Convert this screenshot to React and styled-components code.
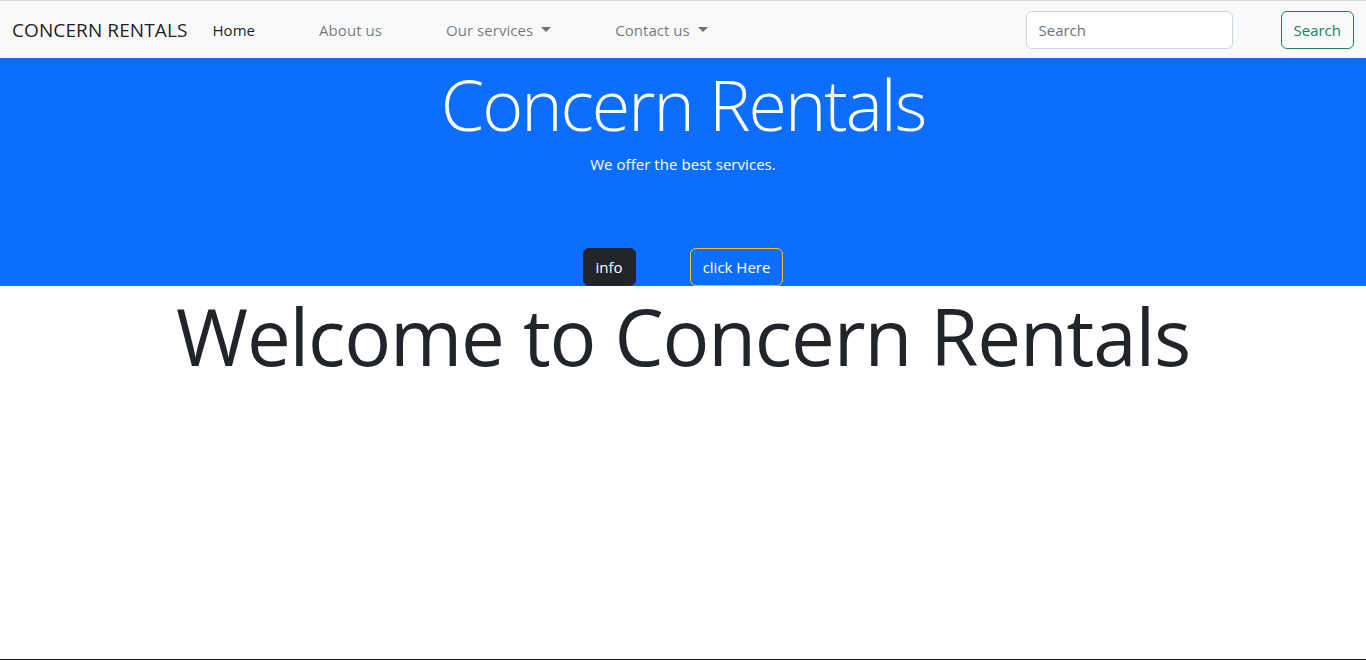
import React from "react";
import styled, { createGlobalStyle } from "styled-components";

const Global = createGlobalStyle`
  html, body { margin: 0; padding: 0; }
  body {
    font-family: "Open Sans", "Noto Sans", sans-serif;
    font-size: 16px;
    color: #212529;
    background: #fff;
  }
  * { box-sizing: border-box; }
`;

const Page = styled.div`
  min-height: 660px;
  display: flex;
  flex-direction: column;
  border-top: 1px solid #dcdcdc;
  border-bottom: 1px solid #1a1a1a;
`;

const Navbar = styled.nav`
  height: 57px;
  background: #f8f9fa;
  display: flex;
  align-items: center;
  padding: 0 12px;
`;

const Brand = styled.a`
  font-size: 19px;
  letter-spacing: 0.1px;
  color: rgba(0, 0, 0, 0.9);
  margin-right: 25px;
  text-decoration: none;
  white-space: nowrap;
`;

const NavList = styled.ul`
  display: flex;
  gap: 64px;
  list-style: none;
  margin: 0;
  padding: 0;
  flex: 1;
`;

const NavLink = styled.a`
  display: flex;
  align-items: center;
  font-size: 15px;
  letter-spacing: 0.05px;
  color: ${(p) => (p.$active ? "rgba(0,0,0,0.9)" : "rgba(0,0,0,0.55)")};
  text-decoration: none;
  white-space: nowrap;
`;

const Caret = styled.span`
  display: inline-block;
  margin-left: 8px;
  width: 0;
  height: 0;
  border-left: 5px solid transparent;
  border-right: 5px solid transparent;
  border-top: 5px solid currentColor;
`;

const SearchForm = styled.form`
  display: flex;
  align-items: center;
  gap: 48px;
`;

const SearchInput = styled.input`
  width: 207px;
  height: 38px;
  border: 1px solid #ced4da;
  border-radius: 6px;
  padding: 0 12px;
  font-family: inherit;
  font-size: 15px;
  background: #fff;
  &::placeholder { color: #6c757d; }
`;

const OutlineButton = styled.button`
  height: 38px;
  padding: 0 12px;
  border: 1px solid #198754;
  border-radius: 6px;
  background: transparent;
  color: #198754;
  font-family: inherit;
  font-size: 15px;
`;

const Hero = styled.header`
  background: #0d6efd;
  height: 228px;
  display: flex;
  flex-direction: column;
  align-items: center;
  color: #fff;
`;

const HeroTitle = styled.h1`
  margin: 4px 0 0;
  font-size: 70px;
  font-weight: 300;
  line-height: 1.2;
  letter-spacing: -2px;
`;

const HeroText = styled.p`
  margin: 8px 0 0;
  font-size: 15px;
  letter-spacing: 0.05px;
`;

const ButtonRow = styled.div`
  margin-top: auto;
  display: flex;
  gap: 54px;
`;

const HeroButton = styled.button`
  height: 38px;
  padding: 0 12px;
  border-radius: 6px;
  font-family: inherit;
  font-size: 15px;
  letter-spacing: 0;
  color: #fff;
  background: ${(p) => (p.$dark ? "#212529" : "transparent")};
  border: 1px solid ${(p) => (p.$dark ? "#212529" : "#ffc107")};
`;

const Welcome = styled.h2`
  margin: 4px 0 0;
  text-align: center;
  font-size: 78px;
  font-weight: 400;
  line-height: 1.2;
  letter-spacing: -1.15px;
  color: #212529;
`;

export default function App() {
  return (
    <>
      <Global />
      <Page>
        <Navbar>
          <Brand href="#">CONCERN RENTALS</Brand>
          <NavList>
            <li><NavLink href="#" $active>Home</NavLink></li>
            <li><NavLink href="#">About us</NavLink></li>
            <li><NavLink href="#">Our services<Caret /></NavLink></li>
            <li><NavLink href="#">Contact us<Caret /></NavLink></li>
          </NavList>
          <SearchForm onSubmit={(e) => e.preventDefault()}>
            <SearchInput placeholder="Search" />
            <OutlineButton type="submit">Search</OutlineButton>
          </SearchForm>
        </Navbar>
        <Hero>
          <HeroTitle>Concern Rentals</HeroTitle>
          <HeroText>We offer the best services.</HeroText>
          <ButtonRow>
            <HeroButton $dark>info</HeroButton>
            <HeroButton>click Here</HeroButton>
          </ButtonRow>
        </Hero>
        <Welcome>Welcome to Concern Rentals</Welcome>
      </Page>
    </>
  );
}
